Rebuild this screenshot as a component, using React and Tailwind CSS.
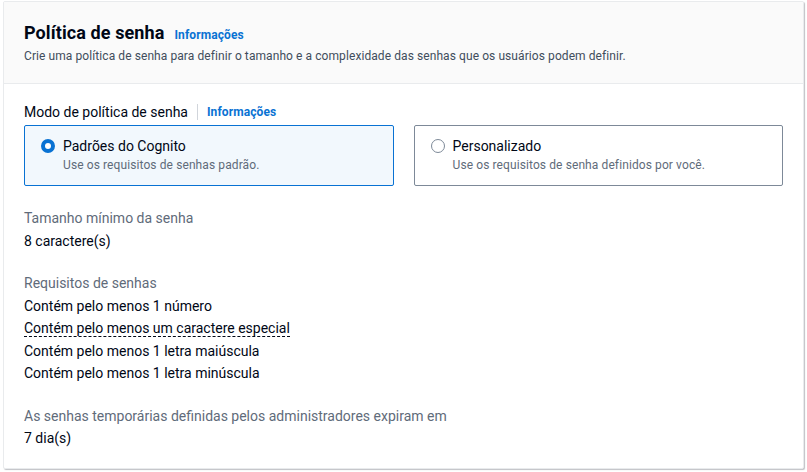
import React from 'react'

const FONT = { fontFamily: 'Roboto, "Open Sans", Arial, sans-serif' }

function RadioCard({ checked, title, desc }) {
  return (
    <div
      className={`flex-1 rounded-[2px] border px-4 pt-[9px] pb-[12px] ${
        checked ? 'border-[#0972d3] bg-[#f2f8fd]' : 'border-[#7d8998] bg-white'
      }`}
    >
      <div className="flex items-start gap-2">
        <span className="mt-[4px] flex h-[14px] w-[14px] shrink-0 items-center justify-center">
          {checked ? (
            <span className="block h-[14px] w-[14px] rounded-full border-[4px] border-[#0972d3] bg-white" />
          ) : (
            <span className="block h-[14px] w-[14px] rounded-full border border-[#7d8998] bg-white" />
          )}
        </span>
        <div>
          <div className="text-[14px] leading-[22px] text-[#000716]">{title}</div>
          <div className="text-[12px] leading-[16px] tracking-[0.1px] text-[#5f6b7a]">{desc}</div>
        </div>
      </div>
    </div>
  )
}

export default function App() {
  return (
    <div className="min-h-[472px] bg-white px-[3px] pt-[1px]" style={FONT}>
      <div className="h-[468px] overflow-hidden rounded-[2px] border border-[#e9ebed] bg-white shadow-[1px_1px_1px_rgba(0,7,22,0.25)]">
        {/* Header */}
        <div className="border-b border-[#e9ebed] bg-[#fafafa] px-5 pt-[19px] pb-[19px]">
          <div className="flex items-baseline gap-[10px]">
            <h2 className="text-[18px] font-bold leading-[24px] tracking-[0.1px] text-[#000716]">Política de senha</h2>
            <span className="text-[12px] font-bold tracking-[0.1px] text-[#0972d3]">Informações</span>
          </div>
          <p className="mt-[3px] text-[12px] leading-[16px] tracking-[0.08px] text-[#414d5c]">
            Crie uma política de senha para definir o tamanho e a complexidade das senhas que os usuários podem definir.
          </p>
        </div>

        {/* Body */}
        <div className="px-5 pt-[17px]">
          <div className="flex items-center">
            <span className="text-[14px] leading-[22px] text-[#000716]">Modo de política de senha</span>
            <span className="mx-[9px] h-[16px] w-px bg-[#d1d5db]" />
            <span className="text-[12px] font-bold tracking-[0.1px] text-[#0972d3]">Informações</span>
          </div>
          <div className="mt-[2px] flex gap-5">
            <RadioCard checked title="Padrões do Cognito" desc="Use os requisitos de senhas padrão." />
            <RadioCard title="Personalizado" desc="Use os requisitos de senha definidos por você." />
          </div>

          <div className="mt-[21px] text-[14px] leading-[22.5px]">
            <div className="text-[#5f6b7a]">Tamanho mínimo da senha</div>
            <div className="text-[#000716]">8 caractere(s)</div>
          </div>

          <div className="mt-[20px] text-[14px] leading-[22.5px] text-[#000716]">
            <div className="text-[#5f6b7a]">Requisitos de senhas</div>
            <div>Contém pelo menos 1 número</div>
            <div>
              <span className="border-b border-dashed border-[#000716]">Contém pelo menos um caractere especial</span>
            </div>
            <div>Contém pelo menos 1 letra maiúscula</div>
            <div>Contém pelo menos 1 letra minúscula</div>
          </div>

          <div className="mt-[20px] text-[14px] leading-[22.5px]">
            <div className="text-[#5f6b7a]">As senhas temporárias definidas pelos administradores expiram em</div>
            <div className="text-[#000716]">7 dia(s)</div>
          </div>
        </div>
      </div>
    </div>
  )
}
